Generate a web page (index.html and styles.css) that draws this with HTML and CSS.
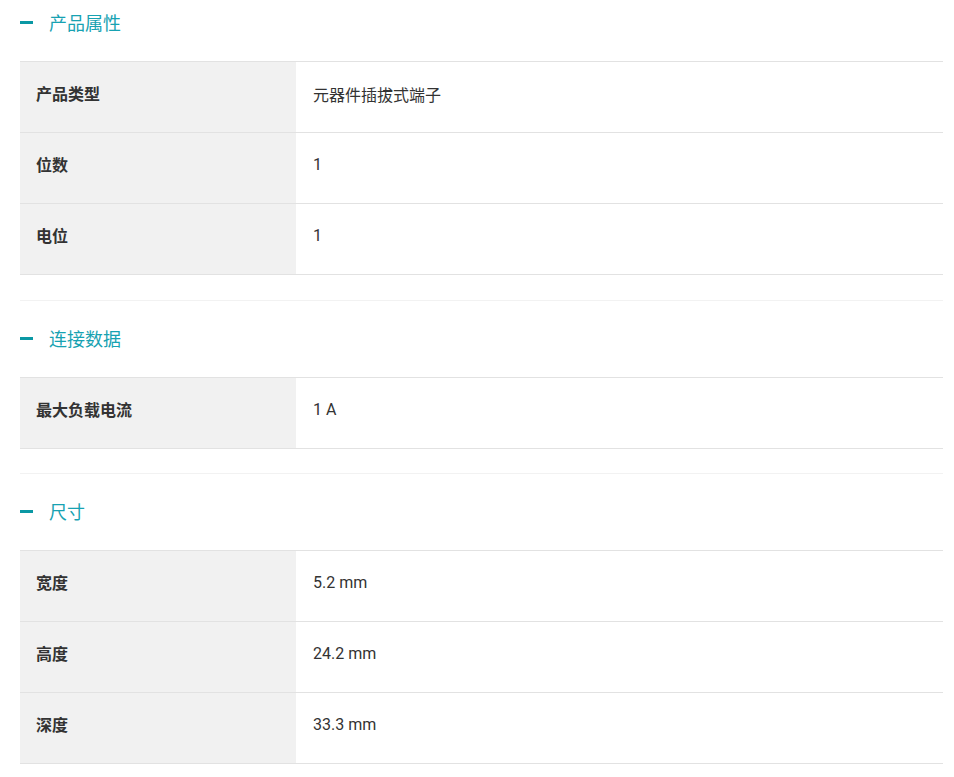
FILE: index.html
```html
<!DOCTYPE html>
<html lang="zh-CN">
<head>
<meta charset="utf-8">
<link rel="stylesheet" href="styles.css">
</head>
<body>
<div class="page">
  <section class="group group-first">
    <h2 class="group-title"><span class="dash"></span>产品属性</h2>
    <div class="spec">
      <div class="row"><div class="label">产品类型</div><div class="value">元器件插拔式端子</div></div>
      <div class="row"><div class="label">位数</div><div class="value">1</div></div>
      <div class="row"><div class="label">电位</div><div class="value">1</div></div>
    </div>
  </section>
  <section class="group">
    <h2 class="group-title"><span class="dash"></span>连接数据</h2>
    <div class="spec">
      <div class="row"><div class="label">最大负载电流</div><div class="value">1 A</div></div>
    </div>
  </section>
  <section class="group">
    <h2 class="group-title"><span class="dash"></span>尺寸</h2>
    <div class="spec">
      <div class="row"><div class="label">宽度</div><div class="value">5.2 mm</div></div>
      <div class="row"><div class="label">高度</div><div class="value">24.2 mm</div></div>
      <div class="row"><div class="label">深度</div><div class="value">33.3 mm</div></div>
    </div>
  </section>
</div>
</body>
</html>
```
FILE: styles.css
```css
html, body {
  margin: 0;
  padding: 0;
  background: #fff;
}
body {
  font-family: Roboto, "Noto Sans CJK SC", sans-serif;
  color: #333;
}
.page {
  margin: 0 11px 0 20px;
}
.group {
  border-top: 1px solid #f2f2f2;
  padding-bottom: 24px;
}
.group-first {
  border-top: none;
  padding-bottom: 25px;
}
.group-title {
  margin: 0;
  height: 76px;
  box-sizing: border-box;
  padding-bottom: 2px;
  display: flex;
  align-items: center;
  font-size: 18px;
  font-weight: normal;
  color: #17a2b2;
  font-family: "Noto Sans CJK SC", sans-serif;
}
.group-first .group-title {
  margin-top: -15px;
}
.dash {
  display: inline-block;
  width: 13px;
  height: 3px;
  background: #0a98a4;
  margin-right: 16px;
}
.spec {
  border-top: 1px solid #e2e2e2;
}
.row {
  display: flex;
  height: 70px;
  border-bottom: 1px solid #e2e2e2;
}
.label {
  width: 260px;
  flex: none;
  background: #f1f1f1;
  padding-left: 16px;
  padding-bottom: 9px;
  display: flex;
  align-items: center;
  font-weight: bold;
  font-size: 16px;
  color: #333;
  font-family: "Noto Sans CJK SC", sans-serif;
}
.value {
  flex: 1;
  padding-left: 17px;
  padding-bottom: 7px;
  display: flex;
  align-items: center;
  font-size: 16px;
  color: #333;
}
```
